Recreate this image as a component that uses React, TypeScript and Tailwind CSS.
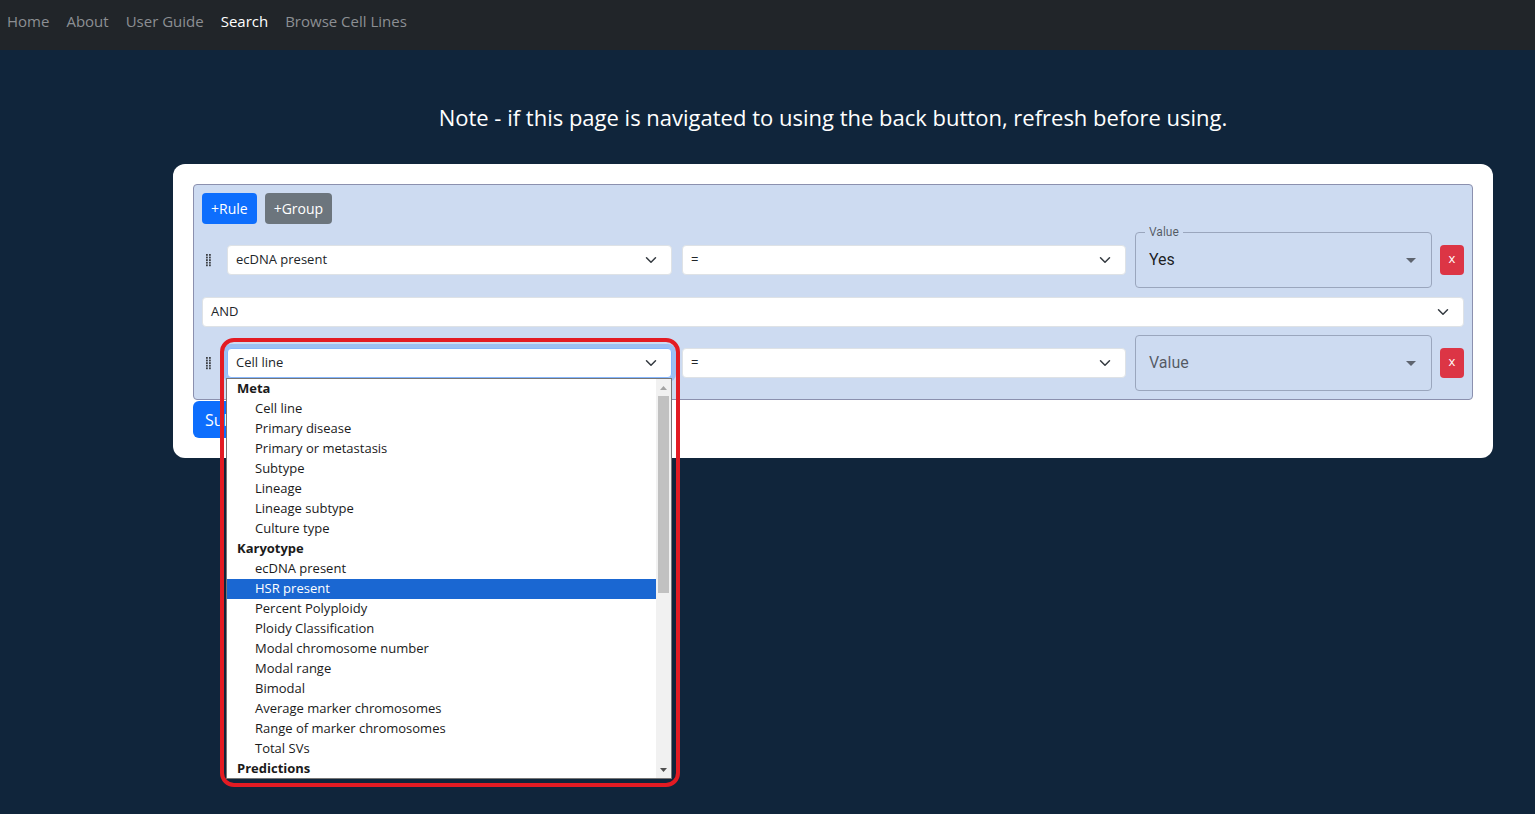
import React from "react";

const font = { fontFamily: '"Open Sans", "Noto Sans", sans-serif' };

function Chevron() {
  return (
    <svg width="16" height="12" viewBox="0 0 16 16" className="shrink-0">
      <path d="m2 5 6 6 6-6" fill="none" stroke="#343a40" strokeWidth="2" strokeLinecap="round" strokeLinejoin="round" />
    </svg>
  );
}

function Caret() {
  return (
    <svg width="24" height="24" viewBox="0 0 24 24" className="shrink-0">
      <path d="M7 10l5 5 5-5z" fill="rgba(0,0,0,0.54)" />
    </svg>
  );
}

function Grip() {
  const dots = [];
  for (let r = 0; r < 5; r++) {
    for (let c = 0; c < 2; c++) {
      dots.push(<rect key={r + "-" + c} x={c * 3} y={r * 2.6} width="1.8" height="1.8" fill="#3d4045" />);
    }
  }
  return (
    <svg width="5" height="13" viewBox="0 0 5 13">
      {dots}
    </svg>
  );
}

function FakeSelect({ label, focused, className }: { label: string; focused?: boolean; className?: string }) {
  return (
    <div
      className={
        "flex h-[30px] items-center justify-between rounded-[4px] bg-white pl-2 pr-3 text-[13px] text-[#212529] " +
        (focused ? "border border-[#86b7fe] shadow-[0_0_0_4px_rgba(13,110,253,0.25)] " : "border border-[#dee2e6] ") +
        (className ?? "")
      }
    >
      <span>{label}</span>
      <Chevron />
    </div>
  );
}

function ValueField({ value }: { value?: string }) {
  return (
    <div className="relative flex h-[56px] w-[297px] shrink-0 items-center justify-between rounded-[4px] border border-[#9aa6bd] pl-[13px] pr-[8px]" style={{ fontFamily: 'Roboto, "Liberation Sans", sans-serif' }}>
      {value ? (
        <>
          <span className="absolute -top-[9px] left-[9px] bg-[#cddbf1] px-[4px] text-[12px] leading-[16px] text-[rgba(0,0,0,0.6)]">Value</span>
          <span className="text-[16px] text-[rgba(0,0,0,0.87)]">{value}</span>
        </>
      ) : (
        <span className="text-[16px] text-[rgba(0,0,0,0.6)]">Value</span>
      )}
      <Caret />
    </div>
  );
}

function DeleteBtn() {
  return (
    <button className="flex h-[30px] w-[24px] shrink-0 items-center justify-center rounded-[4px] bg-[#dc3545] pb-[2px] text-[13px] text-white">
      x
    </button>
  );
}

const options: { text: string; group?: boolean; selected?: boolean }[] = [
  { text: "Meta", group: true },
  { text: "Cell line" },
  { text: "Primary disease" },
  { text: "Primary or metastasis" },
  { text: "Subtype" },
  { text: "Lineage" },
  { text: "Lineage subtype" },
  { text: "Culture type" },
  { text: "Karyotype", group: true },
  { text: "ecDNA present" },
  { text: "HSR present", selected: true },
  { text: "Percent Polyploidy" },
  { text: "Ploidy Classification" },
  { text: "Modal chromosome number" },
  { text: "Modal range" },
  { text: "Bimodal" },
  { text: "Average marker chromosomes" },
  { text: "Range of marker chromosomes" },
  { text: "Total SVs" },
  { text: "Predictions", group: true },
];

function DropdownList() {
  return (
    <div className="absolute left-[-1px] top-[30px] z-20 flex h-[401px] w-[446px] border border-[#767676] bg-white text-[13px] text-[#1a1a1a]">
      <div className="flex-1 overflow-hidden">
        {options.map((o) => (
          <div
            key={o.text}
            className={
              "flex h-[20px] items-center whitespace-nowrap " +
              (o.group ? "pl-[10px] font-bold " : "pl-[28px] ") +
              (o.selected ? "bg-[#1a67d2] text-white" : "")
            }
          >
            {o.text}
          </div>
        ))}
      </div>
      <div className="flex w-[15px] flex-col items-center bg-[#f1f1f1]">
        <div className="flex h-[17px] items-center">
          <svg width="7" height="4" viewBox="0 0 7 4"><path d="M0 4 3.5 0 7 4z" fill="#a3a3a3" /></svg>
        </div>
        <div className="h-[197px] w-[11px] bg-[#c1c1c1]" />
        <div className="flex-1" />
        <div className="flex h-[17px] items-center">
          <svg width="7" height="4" viewBox="0 0 7 4"><path d="M0 0 3.5 4 7 0z" fill="#505050" /></svg>
        </div>
      </div>
    </div>
  );
}

export default function App() {
  return (
    <div className="min-h-screen bg-[#10253b]" style={font}>
      <nav className="flex h-[50px] items-start gap-[17px] bg-[#212529] px-[7px] pt-[9px] text-[15px] leading-[24px] text-[#8c8f93]">
        <span>Home</span>
        <span>About</span>
        <span>User Guide</span>
        <span className="text-white">Search</span>
        <span>Browse Cell Lines</span>
      </nav>

      <div className="ml-[173px] mr-[42px]">
        <h4 className="pt-[52px] pb-[32px] text-center text-[22px] leading-[30px] text-white">
          Note - if this page is navigated to using the back button, refresh before using.
        </h4>

        <div className="rounded-[12px] bg-white p-[20px]">
          <div className="flex flex-col gap-[8px] rounded-[4px] border border-[#8b90ae] bg-[#cddbf1] px-[8px] pt-[8px] pb-[8px]">
            <div className="flex gap-[8px]">
              <button className="h-[31px] rounded-[4px] bg-[#0d6efd] px-[9px] text-[14px] text-white">+Rule</button>
              <button className="h-[31px] rounded-[4px] bg-[#6c757d] px-[9px] text-[14px] text-white">+Group</button>
            </div>

            <div className="flex items-center">
              <div className="flex w-[25px] shrink-0 justify-start pl-[4px]">
                <Grip />
              </div>
              <FakeSelect label="ecDNA present" className="w-[445px] shrink-0" />
              <FakeSelect label="=" className="ml-[10px] w-[444px] shrink-0" />
              <div className="ml-[9px]">
                <ValueField value="Yes" />
              </div>
              <div className="ml-[8px]">
                <DeleteBtn />
              </div>
            </div>

            <FakeSelect label="AND" className="mt-px" />

            <div className="flex items-center">
              <div className="flex w-[25px] shrink-0 justify-start pl-[4px]">
                <Grip />
              </div>
              <div className="relative w-[445px] shrink-0">
                <FakeSelect label="Cell line" focused />
                <DropdownList />
                <div className="pointer-events-none absolute left-[-7px] top-[-10px] z-30 h-[449px] w-[460px] rounded-[14px] border-[4px] border-[#e31b23]" />
              </div>
              <FakeSelect label="=" className="ml-[10px] w-[444px] shrink-0" />
              <div className="ml-[9px]">
                <ValueField />
              </div>
              <div className="ml-[8px]">
                <DeleteBtn />
              </div>
            </div>
          </div>

          <button className="mt-px h-[37px] rounded-[6px] bg-[#0d6efd] px-[12px] text-[16px] text-white">Submit</button>
        </div>
      </div>
    </div>
  );
}
